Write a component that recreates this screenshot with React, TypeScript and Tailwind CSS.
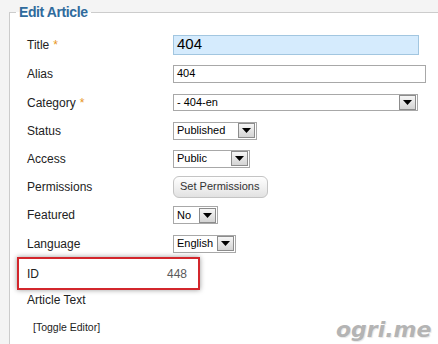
import React from 'react'

const font = "font-['Liberation_Sans',Arial,sans-serif]"

const Arrow = () => (
  <div className="w-[17px] h-[15px] mr-[1px] border border-[#8c8c8c] bg-gradient-to-b from-[#f6f6f6] to-[#d4d4d4] flex items-center justify-center">
    <svg width="9" height="5" viewBox="0 0 9 5">
      <polygon points="0,0 9,0 4.5,5" fill="#000" />
    </svg>
  </div>
)

const Select = ({ value, className }: { value: string; className: string }) => (
  <div className={`${className} border border-[#a8a8a8] bg-white flex items-center justify-between`}>
    <span className="pl-[3px] text-[11px] text-black leading-none">{value}</span>
    <Arrow />
  </div>
)

const Star = () => <span className="text-[#e8961c] ml-[4px]">*</span>

const Row = ({ label, h, children }: { label: React.ReactNode; h: string; children?: React.ReactNode }) => (
  <div className={`${h} flex items-center`}>
    <div className="w-[146px] text-[12px] text-[#222]">{label}</div>
    {children}
  </div>
)

export default function App() {
  return (
    <div className={`w-[438px] h-[344px] overflow-hidden bg-[#f4f4f4] pl-[9px] ${font}`}>
      <fieldset className="mt-[4px] w-[440px] h-[360px] border-t border-l border-[#cccccc] bg-white">
        <legend className="ml-[6px] px-[3px] text-[14px] leading-[17px] font-bold text-[#2f6b9d] tracking-[-0.4px]">
          Edit Article
        </legend>
        <div className="pl-[17px] pt-[9px] flex flex-col">
          <Row label={<>Title<Star /></>} h="h-[29px]">
            <div className="w-[246px] h-[20px] border border-[#a2c6e0] bg-[#d5ebfd] flex items-center pl-[3px] text-[15px] text-black">
              404
            </div>
          </Row>
          <Row label="Alias" h="h-[29px]">
            <div className="w-[253px] h-[18px] border border-[#a8a8a8] bg-white flex items-center pl-[3px] text-[11px] text-black">
              404
            </div>
          </Row>
          <Row label={<>Category<Star /></>} h="h-[29px]">
            <Select value="- 404-en" className="w-[245px] h-[17px]" />
          </Row>
          <Row label="Status" h="h-[27px]">
            <Select value="Published" className="w-[84px] h-[18px]" />
          </Row>
          <Row label="Access" h="h-[29px]">
            <Select value="Public" className="w-[77px] h-[18px]" />
          </Row>
          <Row label="Permissions" h="h-[27px]">
            <button className="w-[95px] h-[22px] rounded-[6px] border border-[#c4c4c4] bg-gradient-to-b from-white to-[#e2e2e2] text-[11px] text-[#333] text-left pl-[6px]">
              Set Permissions
            </button>
          </Row>
          <Row label="Featured" h="h-[30px]">
            <Select value="No" className="w-[45px] h-[18px]" />
          </Row>
          <Row label="Language" h="h-[27px]">
            <Select value="English" className="w-[63px] h-[18px]" />
          </Row>
          <div className="-ml-[10px] w-[183px] h-[33px] border-2 border-[#d3262c] shadow-[0_0_5px_rgba(0,0,0,0.4)] flex items-center justify-between pl-[8px] pr-[11px] text-[12px]">
            <span className="text-[#222]">ID</span>
            <span className="text-[#5a5a5a]">448</span>
          </div>
          <Row label="Article Text" h="h-[20px]" />
          <div className="h-[36px] flex items-center pl-[6px] text-[10.5px] text-[#222]">[Toggle Editor]</div>
        </div>
      </fieldset>
      <div className="absolute left-[336px] top-[313px] font-['DejaVu_Sans',sans-serif] italic font-bold text-[22px] text-[#b4b4b4] [text-shadow:-1px_-1px_0_#fff,1px_1px_1px_#e6e6e6]">
        ogri.me
      </div>
    </div>
  )
}
